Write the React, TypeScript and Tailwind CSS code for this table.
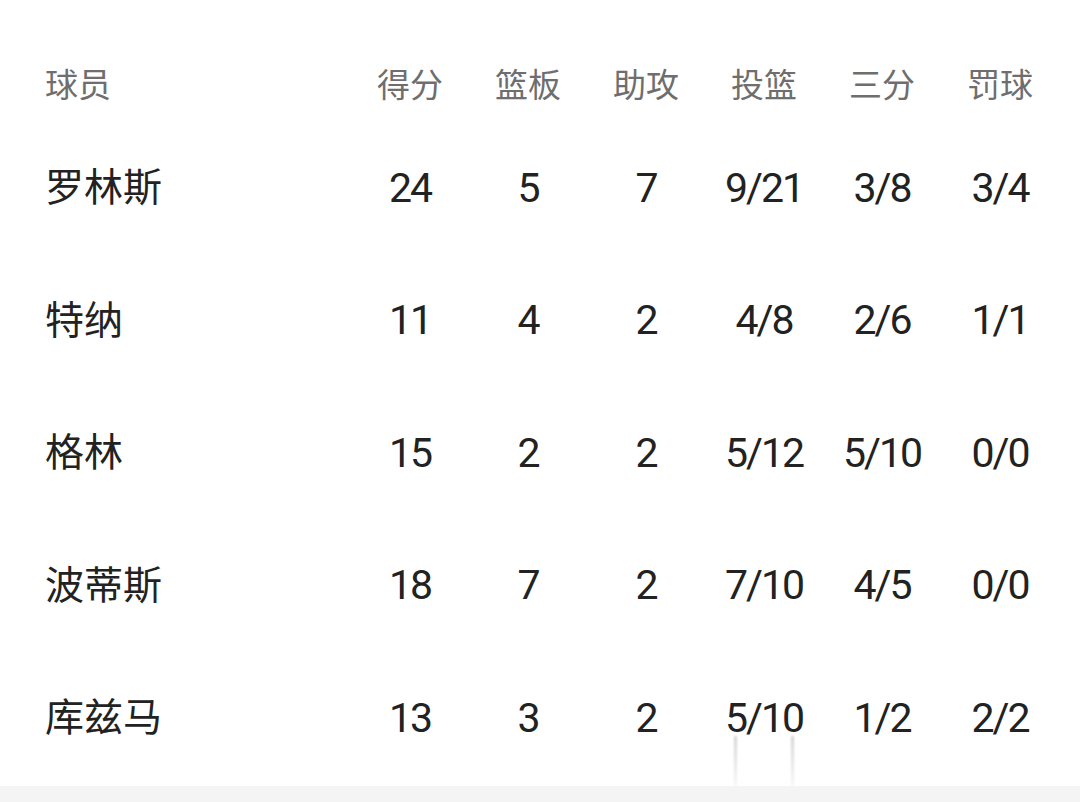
const header = ['球员', '得分', '篮板', '助攻', '投篮', '三分', '罚球']

const rows = [
  ['罗林斯', '24', '5', '7', '9/21', '3/8', '3/4'],
  ['特纳', '11', '4', '2', '4/8', '2/6', '1/1'],
  ['格林', '15', '2', '2', '5/12', '5/10', '0/0'],
  ['波蒂斯', '18', '7', '2', '7/10', '4/5', '0/0'],
  ['库兹马', '13', '3', '2', '5/10', '1/2', '2/2'],
]

const font = { fontFamily: 'Roboto, "Noto Sans CJK SC", sans-serif' }

export default function App() {
  return (
    <div className="w-[1080px] h-[802px] bg-white flex flex-col overflow-hidden relative" style={font}>
      <div className="flex-1 pl-[45px] pt-[50px]">
        {/* Header */}
        <div className="grid grid-cols-[306px_repeat(6,118px)] h-[72px] items-center text-[33px] text-[#6e6e6e]">
          {header.map((h, i) => (
            <div key={h} className={i === 0 ? 'text-left' : 'text-center'}>{h}</div>
          ))}
        </div>

        {/* Rows */}
        {rows.map(row => (
          <div key={row[0]} className="grid grid-cols-[306px_repeat(6,118px)] h-[132.5px] items-center text-[#222]">
            {row.map((cell, i) =>
              i === 0 ? (
                <div key={i} className="text-left text-[39px]">{cell}</div>
              ) : (
                <div key={i} className="text-center text-[41px] tracking-[-2px]">{cell}</div>
              )
            )}
          </div>
        ))}
      </div>

      {/* faint streaks */}
      <div className="absolute left-[734px] top-[736px] w-[3px] h-[50px] bg-gradient-to-b from-[#aaa] to-[#f0f0f0] opacity-50 blur-[1px]" />
      <div className="absolute left-[791px] top-[736px] w-[3px] h-[50px] bg-gradient-to-b from-[#aaa] to-[#f0f0f0] opacity-50 blur-[1px]" />

      <div className="h-[16px] bg-[#f4f4f4]" />
    </div>
  )
}
